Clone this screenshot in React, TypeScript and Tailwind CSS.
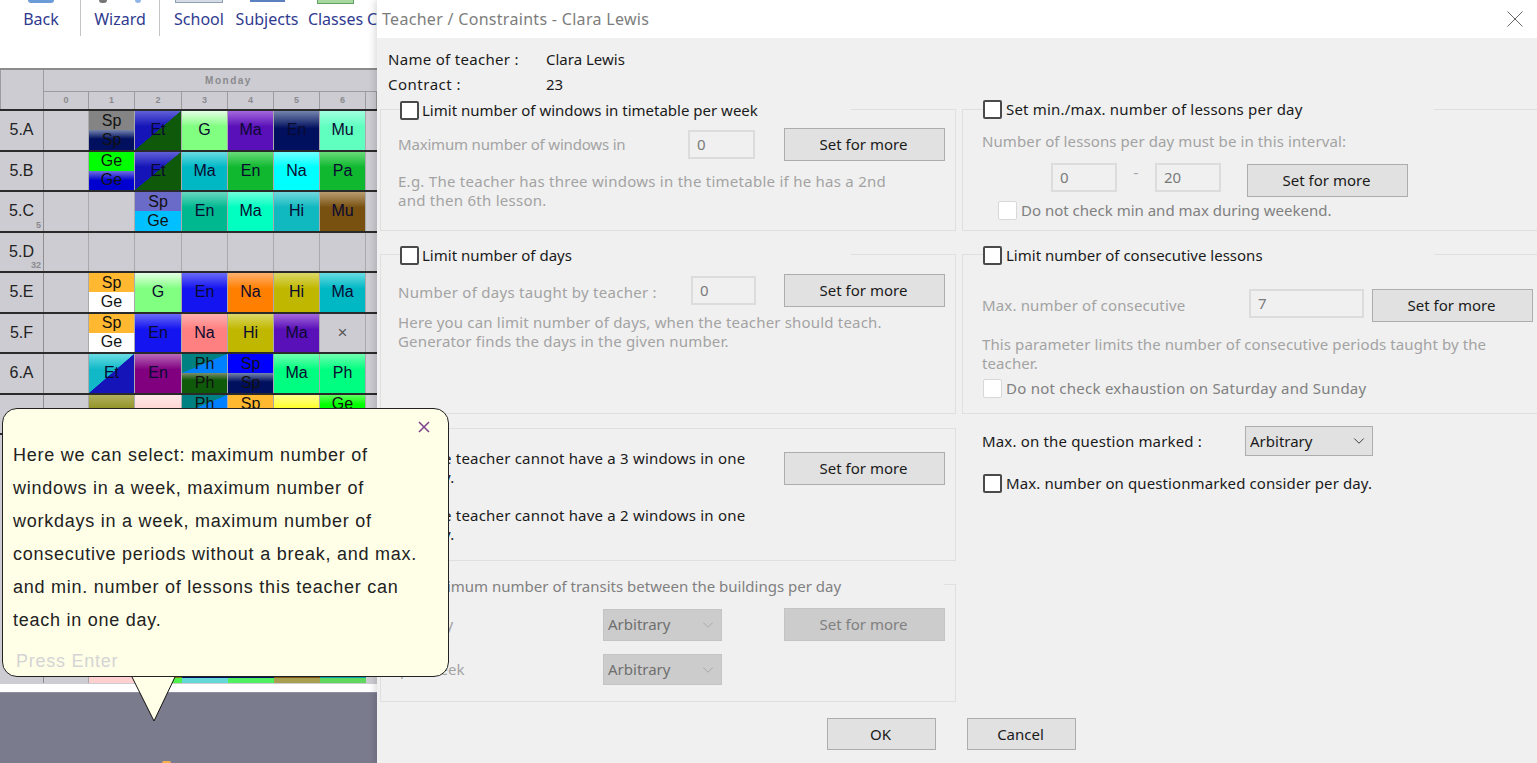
import { ChevronDown } from 'lucide-react'

const CELL: Record<string, string> = {
  navy: 'bg-[linear-gradient(#7484ad,#000f5e_45%)]',
  blue: 'bg-[linear-gradient(#6a6af8,#1414f0_40%)]',
  royal: 'bg-[linear-gradient(#7070e0,#0000d0_50%)]',
  light: 'bg-[linear-gradient(#e4ffe4,#80ff80_40%)]',
  purple: 'bg-[linear-gradient(#a468dc,#5a10b8_40%)]',
  mint: 'bg-[linear-gradient(#a0ffe0,#60ffc0_40%)]',
  teal: 'bg-[linear-gradient(#68dce4,#00b8c4_40%)]',
  green: 'bg-[linear-gradient(#68dc78,#10b830_40%)]',
  cyan: 'bg-[linear-gradient(#70ffff,#00ffff_40%)]',
  sea: 'bg-[linear-gradient(#68d8c0,#00b890_40%)]',
  aqua: 'bg-[linear-gradient(#70ffdc,#00ffc0_40%)]',
  hist: 'bg-[linear-gradient(#70d8dc,#10b8c0_40%)]',
  brown: 'bg-[linear-gradient(#b89c70,#785010_40%)]',
  orange: 'bg-[linear-gradient(#ffb070,#ff8000_40%)]',
  olive: 'bg-[linear-gradient(#dcd868,#c0b800_40%)]',
  salmon: 'bg-[linear-gradient(#ffb0b0,#ff8080_40%)]',
  plum: 'bg-[linear-gradient(#b868b8,#800080_40%)]',
  spring: 'bg-[linear-gradient(#70ffb0,#00ff80_40%)]',
  khaki: 'bg-[linear-gradient(#b0b060,#808000_60%)]',
  pink: 'bg-[linear-gradient(#ffe8e8,#ffc8c8_60%)]',
  yellow: 'bg-[linear-gradient(#ffff90,#ffff00_50%)]',
  lime: 'bg-[linear-gradient(#60ff60,#00ff00_50%)]',
  gray: 'bg-[#848484]',
  ge: 'bg-[#00ff00]',
  dblue: 'bg-[#0000ff]',
  violet: 'bg-[#6a6ac8]',
  sky: 'bg-[#00c0ff]',
  amber: 'bg-[#ffb830]',
  white: 'bg-white',
  forest: 'bg-[linear-gradient(#7c8c6c,#0f5a0a_35%)]',
  phDiag: 'bg-[linear-gradient(to_top_left,#0080ff_49.5%,#008080_50.5%)]',
}

type Slot =
  | null
  | { t: string; c: string }
  | { split: [string, string][] }
  | { diag: 'blueGreen' | 'tealBlue'; t: string }
  | { mark: string }

const s = (t: string, c: string): Slot => ({ t, c })
const two = (a: string, ac: string, b: string, bc: string): Slot => ({
  split: [
    [a, ac],
    [b, bc],
  ],
})

const ROWS: { name: string; sub?: string; cells: Slot[] }[] = [
  {
    name: '5.A',
    cells: [null, two('Sp', 'gray', 'Sp', 'navy'), { diag: 'blueGreen', t: 'Et' }, s('G', 'light'), s('Ma', 'purple'), s('En', 'navy'), s('Mu', 'mint')],
  },
  {
    name: '5.B',
    cells: [null, two('Ge', 'ge', 'Ge', 'royal'), { diag: 'blueGreen', t: 'Et' }, s('Ma', 'teal'), s('En', 'green'), s('Na', 'cyan'), s('Pa', 'green')],
  },
  {
    name: '5.C',
    sub: '5',
    cells: [null, null, two('Sp', 'violet', 'Ge', 'sky'), s('En', 'sea'), s('Ma', 'aqua'), s('Hi', 'hist'), s('Mu', 'brown')],
  },
  { name: '5.D', sub: '32', cells: [null, null, null, null, null, null, null] },
  {
    name: '5.E',
    cells: [null, two('Sp', 'amber', 'Ge', 'white'), s('G', 'light'), s('En', 'blue'), s('Na', 'orange'), s('Hi', 'olive'), s('Ma', 'teal')],
  },
  {
    name: '5.F',
    cells: [null, two('Sp', 'amber', 'Ge', 'white'), s('En', 'blue'), s('Na', 'salmon'), s('Hi', 'olive'), s('Ma', 'purple'), { mark: '×' }],
  },
  {
    name: '6.A',
    cells: [null, { diag: 'tealBlue', t: 'Et' }, s('En', 'plum'), two('Ph', 'phDiag', 'Ph', 'forest'), two('Sp', 'dblue', 'Sp', 'navy'), s('Ma', 'spring'), s('Ph', 'spring')],
  },
  {
    // label of this row sits under the hint bubble
    name: '',
    cells: [null, s('', 'khaki'), s('', 'pink'), two('Ph', 'phDiag', 'Ph', 'forest'), two('Sp', 'amber', 'Ge', 'white'), s('', 'yellow'), two('Ge', 'lime', 'Ge', 'white')],
  },
]

function Cell({ slot }: { slot: Slot }) {
  if (!slot) return <div className="border-r border-[#a9a9ae]" />
  if ('mark' in slot) {
    return <div className="border-r border-[#a9a9ae] flex items-center justify-center text-[17px] text-[#555]">{slot.mark}</div>
  }
  if ('split' in slot) {
    return (
      <div className="border-r border-[#a9a9ae] flex flex-col">
        {slot.split.map(([t, c], i) => (
          <div key={i} className={`flex-1 flex items-center justify-center text-[16px] leading-none text-[#111] overflow-hidden ${CELL[c]}`}>
            {t}
          </div>
        ))}
      </div>
    )
  }
  if ('diag' in slot) {
    const bg =
      slot.diag === 'blueGreen'
        ? 'bg-[linear-gradient(to_top_left,#0f5a0a_49.5%,transparent_50.5%),linear-gradient(#6060d8,#1414b8_40%)]'
        : 'bg-[linear-gradient(to_top_left,#1414b8_49.5%,transparent_50.5%),linear-gradient(#68dce4,#10b8c8_40%)]'
    return (
      <div className={`border-r border-[#a9a9ae] flex items-center justify-center text-[16px] text-[#0a0a30] ${bg}`}>
        {slot.t}
      </div>
    )
  }
  return (
    <div className={`border-r border-[#a9a9ae] flex items-center justify-center text-[16px] text-[#0a0a30] ${CELL[slot.c]}`}>
      {slot.t}
    </div>
  )
}

function Timetable() {
  return (
    <div className="h-[616px] bg-[#cdccd2] border-t-2 border-[#8c8c8c] overflow-hidden font-['Liberation_Sans',sans-serif]">
      <div className="grid grid-cols-[44px_333px] h-[41px] border-b-2 border-[#2a2a2a]">
        <div className="border-r border-l border-[#9c9ca0]" />
        <div className="flex flex-col">
          <div className="h-[22px] flex items-center justify-center pl-[36px] border-b border-[#9c9ca0] text-[10px] font-bold tracking-[1.5px] text-[#8a8a8e]">
            Monday
          </div>
          <div className="flex-1 grid grid-cols-[45px_46px_47px_46px_46px_46px_46px_11px] text-[9px] font-bold text-[#8a8a8e]">
            {['0', '1', '2', '3', '4', '5', '6', ''].map((n, i) => (
              <div key={i} className="flex items-center justify-center border-r border-[#9c9ca0]">
                {n}
              </div>
            ))}
          </div>
        </div>
      </div>
      {ROWS.map((row) => (
        <div
          key={row.name}
          className="grid grid-cols-[44px_45px_46px_47px_46px_46px_46px_46px_11px] h-[40.5px] border-b-2 border-[#2a2a2a]"
        >
          <div className="relative border-r border-[#8f8f93] flex items-center justify-center text-[16px] text-[#222]">
            {row.name}
            {row.sub && (
              <span className="absolute right-[2px] bottom-[1px] text-[9px] font-bold leading-none text-[#8a8a8e]">{row.sub}</span>
            )}
          </div>
          {row.cells.map((c, i) => (
            <Cell key={i} slot={c} />
          ))}
        </div>
      ))}
      <div className="h-[248px] grid grid-cols-[44px_45px_46px_47px_46px_46px_46px_46px_11px] grid-rows-[1fr_7px]">
        <div className="col-span-9 bg-[#cdccd2]" />
        <div className="border-r border-[#8f8f93]" />
        <div className="border-r border-[#a9a9ae]" />
        <div className="bg-[#ffd0d0]" />
        <div className="bg-[#50f050] border-t-2 border-[#808000]" />
        <div className="bg-[#66d8d8] border-t-2 border-[#000f5e]" />
        <div className="bg-[#50f060] border-t-2 border-[#000f5e]" />
        <div className="bg-[#a8a050] border-t-2 border-[#785010]" />
        <div className="bg-[#60d860] border-t-2 border-[#00a0a8]" />
        <div />
      </div>
    </div>
  )
}

function ToolItem({ label, width, children }: { label: string; width: string; children?: React.ReactNode }) {
  return (
    <div className={`shrink-0 flex flex-col items-center h-[36px] ${width}`}>
      <div className="h-[8px] flex justify-center gap-[28px] w-full">{children}</div>
      <span className="text-[16px] leading-[22px] text-[#2f3a8f]">{label}</span>
    </div>
  )
}

function Toolbar() {
  return (
    <div className="h-[68px] bg-white flex items-start overflow-hidden font-['Noto_Sans',sans-serif]">
      <ToolItem label="Back" width="w-[80px] pl-[2px]">
        <div className="w-[26px] h-[3px] bg-[#6c9cd8] rounded-b-full" />
      </ToolItem>
      <div className="shrink-0 w-px h-[36px] bg-[#c4c4c4]" />
      <ToolItem label="Wizard" width="w-[78px]">
        <div className="w-[8px] h-[3px] bg-[#777] rounded-b-full" />
        <div className="w-[6px] h-[3px] bg-[#8fb4e8] rounded-b-full" />
      </ToolItem>
      <div className="shrink-0 w-px h-[36px] bg-[#c4c4c4]" />
      <div className="shrink-0 w-[2px]" />
      <ToolItem label="School" width="w-[74px]">
        <div className="w-[48px] h-[3px] bg-[#d4dde6] border-b border-x border-[#8fa0b0]" />
      </ToolItem>
      <ToolItem label="Subjects" width="w-[62px]">
        <div className="w-[35px] h-[2px] bg-[#5a80c0]" />
      </ToolItem>
      <div className="shrink-0 w-[8px]" />
      <ToolItem label="Classes" width="w-[58px] pl-[1px]">
        <div className="w-[37px] h-[4px] bg-[#a8d8a0] border-b border-x border-[#60a060]" />
      </ToolItem>
      <div className="shrink-0 mt-[8px] ml-[3px] text-[16px] leading-[22px] text-[#2f3a8f]">C</div>
    </div>
  )
}

function Hint() {
  return (
    <>
      <div className="absolute left-[2px] top-[408px] w-[447px] h-[269px] bg-[#ffffe8] border border-[#222] rounded-[15px] pl-[10px] pt-[30px] font-['Liberation_Sans',sans-serif] z-10">
        <svg className="absolute left-[415px] top-[12px]" width="12" height="12" viewBox="0 0 12 12">
          <path d="M1 1 L11 11 M11 1 L1 11" stroke="#7b3f8c" strokeWidth="1.5" />
        </svg>
        <p className="text-[18px] leading-[33px] tracking-[0.75px] text-[#222]">
          Here we can select: maximum number of
          <br />
          windows in a week, maximum number of
          <br />
          workdays in a week, maximum number of
          <br />
          consecutive periods without a break, and max.
          <br />
          and min. number of lessons this teacher can
          <br />
          teach in one day.
        </p>
        <p className="mt-[12px] ml-[3px] text-[18px] leading-[24px] tracking-[0.75px] text-[#d4d4d4]">Press Enter</p>
      </div>
      <svg className="absolute left-[130px] top-[675px] z-20" width="48" height="48" viewBox="0 0 48 48">
        <polygon points="2,2 45,2 24,46" fill="#ffffe8" />
        <path d="M2 2 L24 46 L45 2" fill="none" stroke="#111" strokeWidth="1" />
      </svg>
    </>
  )
}

function Check({ disabled }: { disabled?: boolean }) {
  return (
    <span
      className={`shrink-0 w-[19px] h-[19px] bg-white border ${disabled ? 'border-[#d8d8d8]' : 'border-2 border-[#4a4a4a]'} rounded-[2px]`}
    />
  )
}

function Btn({ label, className, disabled }: { label: string; className: string; disabled?: boolean }) {
  return (
    <div
      className={`flex items-center justify-center shrink-0 pr-[2px] text-[15px] border ${
        disabled ? 'bg-[#cccccc] border-[#c4c4c4] text-[#808080]' : 'bg-[#e1e1e1] border-[#adadad] text-[#1a1a1a]'
      } ${className}`}
    >
      {label}
    </div>
  )
}

function Field({ value, className }: { value: string; className: string }) {
  return (
    <div className={`shrink-0 h-[29px] flex items-center pl-[7px] bg-[#f0f0f0] border-2 border-[#dcdcdc] text-[15px] text-[#7a7a7a] ${className}`}>
      {value}
    </div>
  )
}

function Select({ disabled, className }: { disabled?: boolean; className: string }) {
  return (
    <div
      className={`shrink-0 flex items-center justify-between pl-[4px] pr-[4px] border text-[15px] ${
        disabled ? 'bg-[#cccccc] border-[#c4c4c4] text-[#6f6f6f]' : 'bg-[#e1e1e1] border-[#adadad] text-[#1a1a1a]'
      } ${className}`}
    >
      Arbitrary
      <ChevronDown className={`w-[18px] h-[18px] ${disabled ? 'text-[#a8a8a8]' : 'text-[#333]'}`} strokeWidth={1.25} />
    </div>
  )
}

function Group({
  label,
  legend,
  className,
  disabled,
  children,
}: {
  label?: string
  legend?: string
  className: string
  disabled?: boolean
  children: React.ReactNode
}) {
  return (
    <div className={`border border-[#dfdfdf] ${className}`}>
      {label && (
        <div className={`h-[19px] bg-[#f0f0f0] flex items-center text-[15px] ${legend}`}>
          {disabled ? <span className="w-[17px] shrink-0" /> : <Check />}
          <span className={disabled ? 'text-[#808080]' : 'text-[#1a1a1a]'}>{label}</span>
        </div>
      )}
      {children}
    </div>
  )
}

function Dim({ children, className }: { children: React.ReactNode; className?: string }) {
  return <div className={`text-[15px] text-[#a3a3a3] ${className ?? ''}`}>{children}</div>
}

function Dialog() {
  return (
    <div className="w-[1160px] h-[763px] bg-[#f0f0f0] shadow-[-3px_0_6px_rgba(0,0,0,0.12)] font-['Noto_Sans',sans-serif] leading-[19px]">
      <div className="h-[38px] bg-white flex items-center justify-between pl-[5px] pr-[14px]">
        <span className="text-[16px] tracking-[0.3px] text-[#7d7d7d]">Teacher / Constraints - Clara Lewis</span>
        <svg width="16" height="16" viewBox="0 0 16 16">
          <path d="M0.5 0.5 L15.5 15.5 M15.5 0.5 L0.5 15.5" stroke="#666" strokeWidth="1" />
        </svg>
      </div>

      <div className="pl-[11px] pt-[9px] h-[61px] text-[15px] text-[#1a1a1a]">
        <div className="flex h-[25px] items-center">
          <span className="w-[158px] tracking-[0.3px]">Name of teacher :</span>
          <span>Clara Lewis</span>
        </div>
        <div className="flex h-[25px] items-center">
          <span className="w-[158px] tracking-[0.5px]">Contract :</span>
          <span>23</span>
        </div>
      </div>
      <div className="h-[10px]" />

      <div className="flex pl-[3px] gap-[6px]">
        <div className="w-[576px] flex flex-col">
          <Group
            label="Limit number of windows in timetable per week"
            legend="-mt-[9px] ml-[19px] w-[451px] gap-[3px]"
            className="h-[122px] mb-[23px]"
          >
            <div className="flex items-center pl-[17px] mt-[8px]">
              <Dim className="w-[290px] tracking-[-0.18px]">Maximum number of windows in</Dim>
              <Field value="0" className="w-[67px]" />
              <Btn label="Set for more" className="ml-[29px] w-[161px] h-[33px]" />
            </div>
            <Dim className="pl-[17px] mt-[11px] tracking-[0.26px]">
              E.g. The teacher has three windows in the timetable if he has a 2nd
              <br />
              and then 6th lesson.
            </Dim>
          </Group>

          <Group
            label="Limit number of days"
            legend="-mt-[9px] ml-[19px] w-[451px] gap-[3px]"
            className="h-[160px] mb-[14px]"
          >
            <div className="flex items-center pl-[17px] mt-[9px]">
              <Dim className="w-[293px] mt-[4px] tracking-[0.27px]">Number of days taught by teacher :</Dim>
              <Field value="0" className="w-[65px]" />
              <Btn label="Set for more" className="ml-[28px] w-[161px] h-[33px]" />
            </div>
            <Dim className="pl-[17px] mt-[6px] tracking-[0.18px]">
              Here you can limit number of days, when the teacher should teach.
              <br />
              Generator finds the days in the given number.
            </Dim>
          </Group>

          <Group className="h-[133px] mb-[23px] pl-[22px] pt-[20px] text-[15px] text-[#1a1a1a]">
            <div className="flex justify-between pr-[10px]">
              <div className="flex gap-[3px] tracking-[0.2px]">
                <Check />
                <span>
                  The teacher cannot have a 3 windows in one
                  <br />
                  day.
                </span>
              </div>
              <Btn label="Set for more" className="w-[161px] h-[33px] mt-[3px]" />
            </div>
            <div className="flex gap-[3px] mt-[19px] tracking-[0.2px]">
              <Check />
              <span>
                The teacher cannot have a 2 windows in one
                <br />
                day.
              </span>
            </div>
          </Group>

          <Group
            label="Maximum number of transits between the buildings per day"
            legend="-mt-[8px] ml-[19px] w-[544px]"
            disabled
            className="h-[118px]"
          >
            <div className="flex items-center mt-[12px] pl-[19px]">
              <Dim className="w-[203px]">per day</Dim>
              <Select disabled className="w-[119px] h-[32px]" />
              <Btn label="Set for more" disabled className="ml-[62px] w-[161px] h-[33px]" />
            </div>
            <div className="flex items-center mt-[13px] pl-[19px]">
              <Dim className="w-[203px]">per week</Dim>
              <Select disabled className="w-[119px] h-[31px]" />
            </div>
          </Group>

          <div className="flex mt-[16px] pl-[447px] gap-[31px]">
            <Btn label="OK" className="w-[109px] h-[32px]" />
            <Btn label="Cancel" className="w-[109px] h-[32px]" />
          </div>
        </div>

        <div className="flex-1 flex flex-col">
          <Group
            label="Set min./max. number of lessons per day"
            legend="-mt-[10px] ml-[20px] w-[451px] gap-[4px] tracking-[0.2px]"
            className="h-[122px] mb-[23px] border-r-0"
          >
            <Dim className="pl-[19px] mt-[13px] tracking-[0.1px]">Number of lessons per day must be in this interval:</Dim>
            <div className="flex items-start mt-[12px] pl-[88px]">
              <Field value="0" className="w-[66px]" />
              <Dim className="w-[38px] text-center">-</Dim>
              <Field value="20" className="w-[66px]" />
              <Btn label="Set for more" className="ml-[26px] w-[161px] h-[33px] mt-[1px]" />
            </div>
            <div className="flex items-center gap-[4px] pl-[35px] mt-[4px] text-[15px] text-[#808080]">
              <Check disabled />
              Do not check min and max during weekend.
            </div>
          </Group>

          <Group
            label="Limit number of consecutive lessons"
            legend="-mt-[9px] ml-[20px] w-[451px] gap-[4px]"
            className="h-[160px] mb-[12px] border-r-0"
          >
            <div className="flex items-start pl-[19px] mt-[24px]">
              <Dim className="w-[267px] pt-[7px] tracking-[0.15px]">Max. number of consecutive</Dim>
              <Field value="7" className="w-[115px]" />
              <Btn label="Set for more" className="ml-[8px] w-[161px] h-[33px]" />
            </div>
            <Dim className="pl-[19px] mt-[13px] tracking-[0.1px]">
              This parameter limits the number of consecutive periods taught by the
              <br />
              teacher.
            </Dim>
            <div className="flex items-center gap-[4px] pl-[20px] mt-[6px] text-[15px] tracking-[0.25px] text-[#808080]">
              <Check disabled />
              Do not check exhaustion on Saturday and Sunday
            </div>
          </Group>

          <div className="flex items-center pl-[20px] text-[15px] text-[#1a1a1a]">
            <span className="w-[263px] tracking-[0.17px]">Max. on the question marked :</span>
            <Select className="w-[128px] h-[30px]" />
          </div>
          <div className="flex items-center gap-[4px] pl-[21px] mt-[18px] text-[15px] tracking-[0.1px] text-[#1a1a1a]">
            <Check />
            Max. number on questionmarked consider per day.
          </div>
        </div>
      </div>
    </div>
  )
}

export default function App() {
  return (
    <div className="relative w-[1537px] h-[763px] overflow-hidden flex">
      <div className="w-[377px] shrink-0 flex flex-col">
        <Toolbar />
        <Timetable />
        <div className="h-[8px] bg-white" />
        <div className="h-[71px] bg-[#7b7b8e] border-t border-[#8f8f9e] flex items-end pl-[162px]">
          <div className="w-[9px] h-[2px] bg-[#f5b04a] rounded-t-full" />
        </div>
      </div>
      <Dialog />
      <Hint />
    </div>
  )
}
